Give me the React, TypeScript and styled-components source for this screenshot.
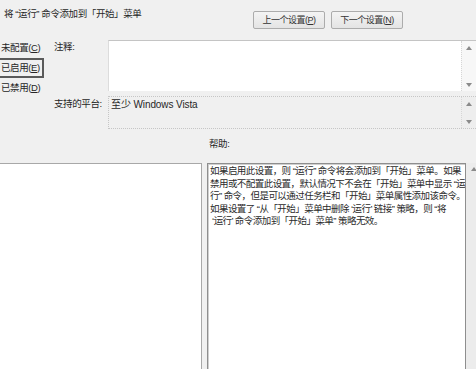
import styled, { createGlobalStyle } from 'styled-components';

const GlobalStyle = createGlobalStyle`
    html, body {
        margin: 0;
        padding: 0;
        background: #f0f0f0;
        overflow: hidden;
    }
    body {
        font-family: "Liberation Sans", "Noto Sans CJK SC", sans-serif;
        color: #262626;
    }
`;

const Page = styled.div`
    width: 476px;
    height: 369px;
    overflow: hidden;
    background: #f0f0f0;
`;

// the dialog is wider than the shot, its left edge is cut off
const Dialog = styled.div`
    width: 498px;
    margin-left: -22px;
    font-size: 9.5px;
    letter-spacing: -0.4px;
    white-space: nowrap;
`;

const TopRow = styled.div`
    display: flex;
    align-items: flex-start;
    height: 40px;
    padding: 0 73px 0 26px;
`;

const Title = styled.div`
    margin-top: 7px;
    line-height: 14px;
`;

const NavButtons = styled.div`
    display: flex;
    gap: 6px;
    margin-left: auto;
    margin-top: 11px;
`;

const NavButton = styled.button`
    width: 72px;
    height: 18px;
    padding: 0;
    font-family: inherit;
    font-size: 9px;
    letter-spacing: -0.5px;
    line-height: 16px;
    color: #333;
    border: 1px solid #acacac;
    border-radius: 2px;
    background: linear-gradient(#f4f4f4, #e4e4e4);
`;

const Key = styled.span`
    text-decoration: underline;
`;

const SettingsGrid = styled.div`
    display: grid;
    grid-template-columns: 76px 54px 1fr;
    grid-template-rows: 51px 33px;
    row-gap: 5px;
`;

const RadioColumn = styled.div`
    grid-row: 1 / span 2;
    display: flex;
    flex-direction: column;
    margin-top: -2px;
`;

const RadioItem = styled.div<{ focused?: boolean }>`
    display: flex;
    align-items: center;
    gap: 5px;
    height: 20px;
    width: 68px;
    box-sizing: border-box;
    padding-left: 4px;
    border: 2px solid ${props => (props.focused ? '#5a5a5a' : 'transparent')};
    margin-left: -2px;
`;

const RadioDot = styled.span<{ checked?: boolean }>`
    width: 11px;
    height: 11px;
    border-radius: 50%;
    border: 1px solid #8a8a8a;
    background: ${props => (props.checked ? 'radial-gradient(#1f6fc5 35%, #fff 40%)' : '#fff')};
    flex: none;
`;

const RadioLabel = styled.span`
    margin-left: 1px;
    line-height: 14px;
`;

const FieldLabel = styled.div<{ top: number }>`
    padding-top: ${props => props.top}px;
    line-height: 14px;
`;

const CommentBox = styled.div`
    display: flex;
    background: #fff;
    border-top: 1px solid #c4c4c4;
    border-left: 1px solid #dcdcdc;
`;

const CommentText = styled.div`
    flex: 1;
`;

const PlatformBox = styled.div`
    display: flex;
    background: #f0f0f0;
    border: 1px dotted #c6c6c6;
    border-right: none;
`;

const PlatformText = styled.div`
    flex: 1;
    padding: 1px 2px;
    line-height: 14px;
    font-size: 10px;
    letter-spacing: -0.1px;
`;

const ScrollStrip = styled.div<{ light?: boolean }>`
    width: 15px;
    display: flex;
    flex-direction: column;
    justify-content: space-between;
    align-items: center;
    padding: 5px 0 4px;
    box-sizing: border-box;
    background: ${props => (props.light ? '#f7f7f7' : '#eeeeee')};
    border-left: 1px dotted #d6d6d6;
`;

const LowerGrid = styled.div`
    display: grid;
    grid-template-columns: 224px 259px 15px;
    column-gap: 5px;
    grid-template-rows: 26px 220px;
    margin-top: 8px;
`;

const SectionLabel = styled.div<{ indent: number }>`
    padding-left: ${props => props.indent}px;
    line-height: 14px;
`;

const OptionsBox = styled.div`
    background: #fff;
    border: 1px solid #a8a8a8;
    border-left: none;
`;

const HelpBox = styled.div`
    background: #fff;
    border: 1px solid #8e8e8e;
    box-shadow: inset 1px 1px 0 #cfcfcf;
    padding: 1px 2px;
    font-size: 9.5px;
    line-height: 12.6px;
    color: #2a2a2a;
    overflow: hidden;
`;

const HelpLine = styled.div`
    white-space: pre;
    letter-spacing: -0.55px;
`;

const HelpScroll = styled.div`
    margin-left: -5px;
    width: 15px;
    display: flex;
    justify-content: center;
    padding-top: 4px;
    background: #ececec;
`;

const Arrow = ({ down }: { down?: boolean }) => (
    <svg width="6" height="4" viewBox="0 0 6 4">
        <path d={down ? 'M0 0 L6 0 L3 4 Z' : 'M0 4 L6 4 L3 0 Z'} fill="#8a8a8a" />
    </svg>
);

const helpLines = [
    '如果启用此设置，则 “运行” 命令将会添加到「开始」菜单。如果',
    '禁用或不配置此设置，默认情况下不会在「开始」菜单中显示 “运',
    '行” 命令，但是可以通过任务栏和「开始」菜单属性添加该命令。',
    '如果设置了 “从「开始」菜单中删除 ‘运行’ 链接” 策略，则 “将',
    ' ‘运行’ 命令添加到「开始」菜单” 策略无效。',
];

const App = () => {
    return (
        <Page>
            <GlobalStyle />
            <Dialog>
                <TopRow>
                    <Title>将 “运行” 命令添加到「开始」菜单</Title>
                    <NavButtons>
                        <NavButton>上一个设置(<Key>P</Key>)</NavButton>
                        <NavButton>下一个设置(<Key>N</Key>)</NavButton>
                    </NavButtons>
                </TopRow>
                <SettingsGrid>
                    <RadioColumn>
                        <RadioItem>
                            <RadioDot />
                            <RadioLabel>未配置(<Key>C</Key>)</RadioLabel>
                        </RadioItem>
                        <RadioItem focused>
                            <RadioDot checked />
                            <RadioLabel>已启用(<Key>E</Key>)</RadioLabel>
                        </RadioItem>
                        <RadioItem>
                            <RadioDot />
                            <RadioLabel>已禁用(<Key>D</Key>)</RadioLabel>
                        </RadioItem>
                    </RadioColumn>
                    <FieldLabel top={-3}>注释:</FieldLabel>
                    <CommentBox>
                        <CommentText />
                        <ScrollStrip light>
                            <Arrow />
                            <Arrow down />
                        </ScrollStrip>
                    </CommentBox>
                    <FieldLabel top={1}>支持的平台:</FieldLabel>
                    <PlatformBox>
                        <PlatformText>至少 Windows Vista</PlatformText>
                        <ScrollStrip>
                            <Arrow />
                            <Arrow down />
                        </ScrollStrip>
                    </PlatformBox>
                </SettingsGrid>
                <LowerGrid>
                    <SectionLabel indent={0}>选项:</SectionLabel>
                    <SectionLabel indent={2}>帮助:</SectionLabel>
                    <div />
                    <OptionsBox />
                    <HelpBox>
                        {helpLines.map(line => (
                            <HelpLine key={line}>{line}</HelpLine>
                        ))}
                    </HelpBox>
                    <HelpScroll>
                        <Arrow />
                    </HelpScroll>
                </LowerGrid>
            </Dialog>
        </Page>
    );
};

export default App;
